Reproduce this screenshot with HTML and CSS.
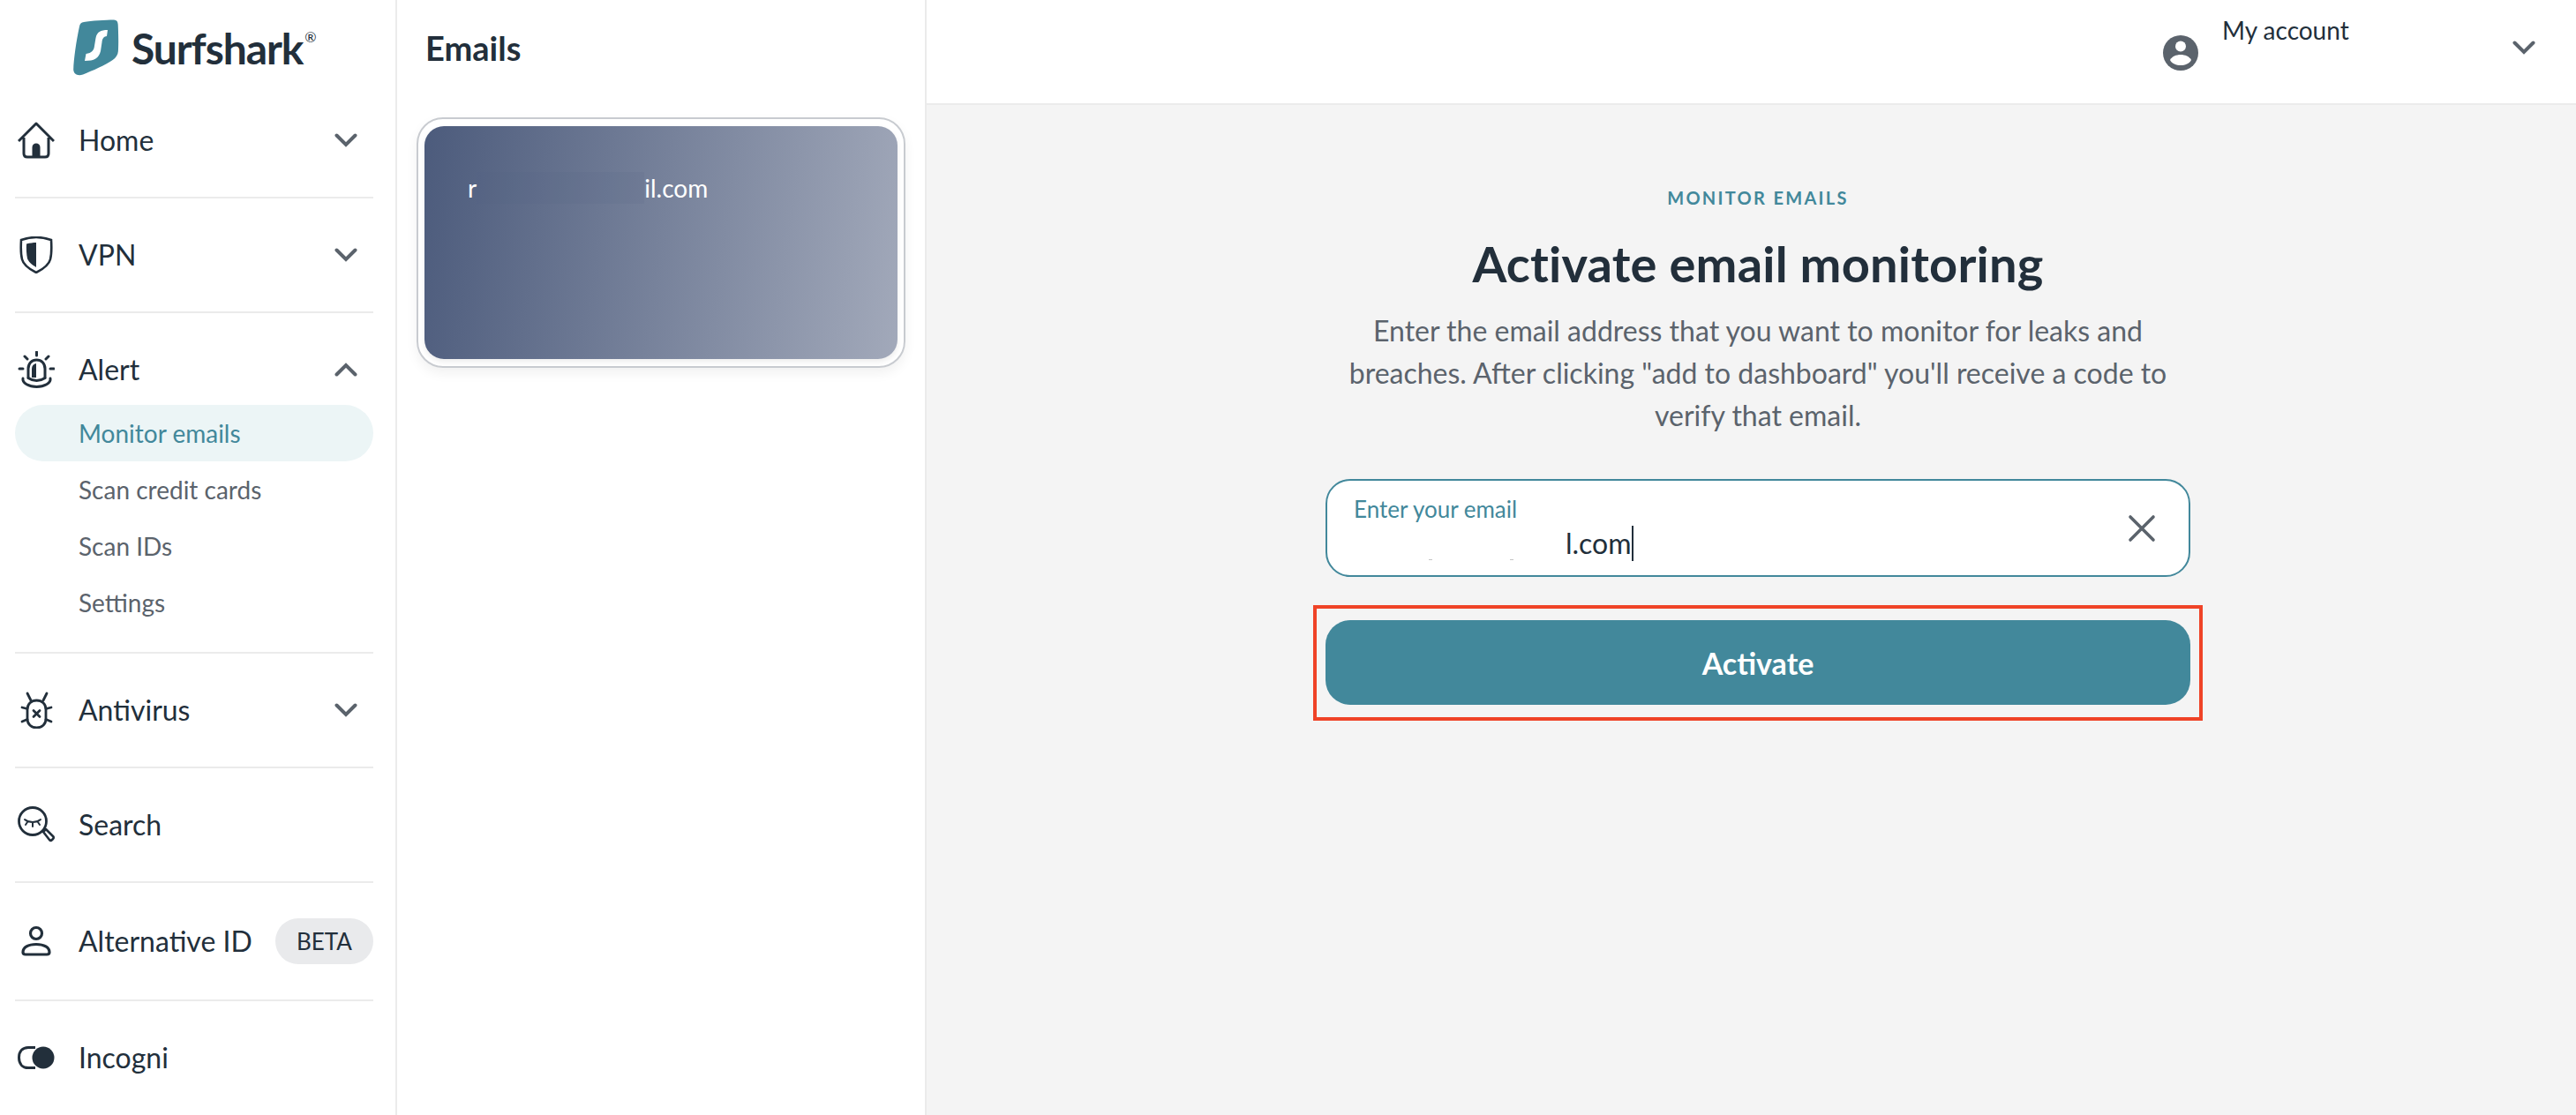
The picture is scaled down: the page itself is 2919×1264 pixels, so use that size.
FILE: index.html
```html
<!DOCTYPE html>
<html lang="en">
<head>
    <meta charset="UTF-8">
    <title>Surfshark - Monitor emails</title>
    <link rel="stylesheet" href="styles.css">
</head>
<body>
    <aside class="sidebar">
        <div class="logo">
            <svg class="logo-mark" viewBox="0 0 52 64"><path d="M12 3C20 1.500 37 .5 46 .5 49.500 .7 50.500 2.500 50.700 6c.5 10 .7 22 .2 30-.3 4-2.500 7.500-6.200 10C36 52 22 58 11 62.500 5 64.500 .5 62 .2 57 .5 45 3.500 24 7 8 7.500 5 9 3.500 12 3z" fill="#42889b"/><path d="M39 12C31 12 27 14 25.500 21L24 30C23.500 35 21 38 14.500 39L13 47C24 47 29 44 31 36L32.500 26C33 21 35 19.500 38 19z" fill="#fff"/></svg>
            <span class="logo-text">Surfshark</span><span class="logo-reg">®</span>
        </div>
        <nav class="nav">
            <div class="nav-row">
                <svg class="nav-icon" viewBox="0 0 42 42"><path d="M1 22L21 2l20 20M7 18v18c0 2.500 1.500 4 4 4h20c2.500 0 4-1.500 4-4V18" fill="none" stroke="#222f3b" stroke-width="3" stroke-linejoin="round"/><path d="M16.500 39V29c0-3 2-4.500 4.500-4.500s4.500 1.500 4.500 4.500v10z" fill="#222f3b"/></svg>
                <span class="nav-label">Home</span>
                <svg class="chevron" viewBox="0 0 26 16"><path d="M2.500 2.500L13 13 23.500 2.500" fill="none" stroke="#5b636c" stroke-width="4" stroke-linecap="round"/></svg>
            </div>
            <div class="nav-row">
                <svg class="nav-icon" viewBox="0 0 42 42"><path d="M4 4c6-2 12-3 17-3s11 1 17 3c.5 8 .5 16-1 22-1.500 6-8 11-16 15C13 37 6.500 32 5 26 3.500 20 3.500 12 4 4z" fill="none" stroke="#222f3b" stroke-width="2.600"/><path d="M21 7c-3.500 0-7 .5-11 1.500-.3 6 0 12 1 16.500 1 3.500 5 7 10 10z" fill="#222f3b"/></svg>
                <span class="nav-label">VPN</span>
                <svg class="chevron" viewBox="0 0 26 16"><path d="M2.500 2.500L13 13 23.500 2.500" fill="none" stroke="#5b636c" stroke-width="4" stroke-linecap="round"/></svg>
            </div>
            <div class="nav-row nav-row-open">
                <svg class="nav-icon" viewBox="0 0 42 42"><g fill="none" stroke="#222f3b" stroke-width="3" stroke-linecap="round"><path d="M21.500 1v4M8 6l3 3M35 6l-3 3M2 20h4M37 20h4"/><path d="M12 30V20c0-6 4-10 9.500-10S31 14 31 20v10"/><path d="M6 31c-1 5.500 7 9.500 15.500 9.500S38 36.500 37 31"/><path d="M12 30.500c3 2 6 3 9.500 3s6.500-1 9.500-3"/></g><path d="M21 14c-3 .5-5 3-5 6v10h5z" fill="#222f3b"/></svg>
                <span class="nav-label">Alert</span>
                <svg class="chevron" viewBox="0 0 26 16"><path d="M2.500 13.500L13 3 23.500 13.500" fill="none" stroke="#5b636c" stroke-width="4" stroke-linecap="round"/></svg>
            </div>
            <ul class="sub-list">
                <li class="sub-item sub-item-active">Monitor emails</li>
                <li class="sub-item">Scan credit cards</li>
                <li class="sub-item">Scan IDs</li>
                <li class="sub-item">Settings</li>
            </ul>
            <div class="nav-row">
                <svg class="nav-icon" viewBox="0 0 42 42"><g fill="none" stroke="#222f3b" stroke-width="2.800" stroke-linecap="round"><path d="M11 2l4 8M33 2l-4 8M5 18l6 1.500M38 18l-6 1.500M5 34l6-2.500M38 34l-6-2.500"/><path d="M11 20c0-6 4.500-10 10.500-10S32 14 32 20v11c0 6-4.500 10-10.500 10S11 37 11 31z"/><path d="M18 21.500l7 7M25 21.500l-7 7"/></g></svg>
                <span class="nav-label">Antivirus</span>
                <svg class="chevron" viewBox="0 0 26 16"><path d="M2.500 2.500L13 13 23.500 2.500" fill="none" stroke="#5b636c" stroke-width="4" stroke-linecap="round"/></svg>
            </div>
            <div class="nav-row">
                <svg class="nav-icon" viewBox="0 0 42 42"><circle cx="17" cy="17" r="15.500" fill="none" stroke="#222f3b" stroke-width="2.800"/><path d="M8 15c5 4 13 4 18 0M11 18l-2 3M17 19v4M23 18l2 3" fill="none" stroke="#222f3b" stroke-width="2" stroke-linecap="round"/><path d="M29 29l3-3 8 8c1 1 1 2 0 3l-1 1c-1 1-2 1-3 0z" fill="none" stroke="#222f3b" stroke-width="2.600" stroke-linejoin="round"/></svg>
                <span class="nav-label">Search</span>
            </div>
            <div class="nav-row nav-row-tall">
                <svg class="nav-icon" viewBox="0 0 42 42"><circle cx="21" cy="12" r="6.500" fill="none" stroke="#222f3b" stroke-width="3.200"/><path d="M9 36c-2 0-3-1-3-2.500C6 28 12 24.500 21 24.500s15 3.500 15 9c0 1.500-1 2.500-3 2.500z" fill="none" stroke="#222f3b" stroke-width="3.200" stroke-linejoin="round"/></svg>
                <span class="nav-label">Alternative ID</span>
                <span class="badge">BETA</span>
            </div>
            <div class="nav-row nav-row-last">
                <svg class="nav-icon" viewBox="0 0 42 42"><path d="M20 9.500h-8C5.500 9.500 1.500 14 1.500 21S5.500 32.500 12 32.500h8" fill="none" stroke="#222f3b" stroke-width="3"/><circle cx="29" cy="21" r="12.500" fill="#222f3b"/></svg>
                <span class="nav-label">Incogni</span>
            </div>
        </nav>
    </aside>

    <section class="emails">
        <h2 class="emails-title">Emails</h2>
        <div class="card-frame">
            <div class="card">
                <span>r</span><span class="card-redact"></span><span>il.com</span>
            </div>
        </div>
    </section>

    <div class="main">
        <header class="topbar">
            <svg class="account-icon" viewBox="0 0 40 40"><circle cx="20" cy="20" r="20" fill="#5b636c"/><circle cx="20" cy="12.500" r="6" fill="#fff"/><path d="M8 28c2-4 7-6 12-6s10 2 12 6c-2 4-7 6-12 6S10 32 8 28z" fill="#fff"/></svg>
            <span class="account-name">My account</span>
            <svg class="chevron" viewBox="0 0 26 16"><path d="M2.500 2.500L13 13 23.500 2.500" fill="none" stroke="#5b636c" stroke-width="4" stroke-linecap="round"/></svg>
        </header>
        <main class="content">
            <div class="eyebrow">MONITOR EMAILS</div>
            <h1 class="headline">Activate email monitoring</h1>
            <p class="intro">Enter the email address that you want to monitor for leaks and breaches. After clicking "add to dashboard" you'll receive a code to verify that email.</p>
            <div class="field">
                <div class="field-text">
                    <label class="field-label">Enter your email</label>
                    <div class="field-value"><span class="value-redact"></span><span>l.com</span><span class="caret"></span></div>
                </div>
                <svg class="field-clear" viewBox="0 0 32 32"><path d="M3 3l26 26M29 3L3 29" fill="none" stroke="#5b636c" stroke-width="3.600" stroke-linecap="round"/></svg>
            </div>
            <div class="highlight">
                <button class="activate">Activate</button>
            </div>
        </main>
    </div>
</body>
</html>
```
FILE: styles.css
```css
* {
    box-sizing: border-box;
}
html, body {
    height: 100%;
}
body {
    margin: 0;
    display: flex;
    height: 1264px;
    overflow: hidden;
    background: #fff;
    color: #222f3b;
    font-family: Lato, "Open Sans", sans-serif;
}

/* sidebar */
.sidebar {
    width: 450px;
    flex: none;
    border-right: 2px solid #ebebeb;
    padding: 0 25px 0 17px;
}
.logo {
    height: 95px;
    padding: 22px 0 0 66px;
    display: flex;
    align-items: flex-start;
}
.logo-mark {
    width: 52px;
    height: 64px;
    flex: none;
}
.logo-text {
    margin: 9px 0 0 14px;
    font-size: 48px;
    line-height: 48px;
    font-weight: 700;
    letter-spacing: -1.1px;
}
.logo-reg {
    margin: 10px 0 0 2px;
    font-size: 16px;
    line-height: 20px;
}
.nav-row {
    height: 130px;
    display: flex;
    align-items: center;
    border-bottom: 2px solid #ebebeb;
}
.nav-row-open {
    height: 104px;
    padding-top: 23px;
    border-bottom: none;
}
.nav-row-tall {
    height: 134px;
}
.nav-row-last {
    padding-bottom: 2px;
    border-bottom: none;
}
.nav-icon {
    width: 42px;
    height: 42px;
    flex: none;
    margin: 0 27px 0 3px;
}
.nav-label {
    flex: 1;
    font-size: 32px;
    line-height: 40px;
}
.chevron {
    width: 26px;
    height: 16px;
    flex: none;
    margin-right: 18px;
}
.badge {
    flex: none;
    width: 111px;
    height: 52px;
    border-radius: 26px;
    background: #e9eaec;
    font-size: 26px;
    line-height: 52px;
    text-align: center;
}
.sub-list {
    list-style: none;
    margin: 0;
    padding: 0 0 24px;
    border-bottom: 2px solid #ebebeb;
}
.sub-item {
    height: 64px;
    padding-left: 72px;
    border-radius: 32px;
    color: #5b636c;
    font-size: 28px;
    line-height: 64px;
}
.sub-item-active {
    background: #ecf5f6;
    color: #42889b;
}

/* emails column */
.emails {
    width: 600px;
    flex: none;
    border-right: 2px solid #ebebeb;
    padding: 0 22px;
}
.emails-title {
    margin: 0;
    padding: 32px 0 0 10px;
    height: 133px;
    font-size: 38px;
    line-height: 44px;
    font-weight: 700;
}
.card-frame {
    width: 554px;
    height: 284px;
    padding: 8px 7px;
    border: 2px solid #c8cbd0;
    border-radius: 30px;
    box-shadow: 0 6px 14px rgba(0, 0, 0, 0.06);
}
.card {
    height: 100%;
    padding: 52px 0 0 49px;
    border-radius: 22px;
    background: linear-gradient(98deg, #4c5b7c 0%, #a2a9ba 100%);
    box-shadow: 0 3px 6px rgba(0, 0, 0, 0.08);
    color: #fff;
    font-size: 28px;
    line-height: 36px;
    display: flex;
    align-items: flex-start;
}
.card-redact {
    width: 190px;
    height: 36px;
    background: rgba(80, 95, 130, 0.12);
}

/* right side */
.main {
    flex: 1;
    min-width: 0;
    background: #f4f4f4;
}
.topbar {
    height: 119px;
    background: #fff;
    border-bottom: 2px solid #ebebeb;
    display: flex;
    align-items: center;
    padding: 0 0 0 1401px;
}
.topbar .chevron {
    margin: 0 0 9px 4px;
}
.account-icon {
    width: 40px;
    height: 40px;
    flex: none;
    margin-top: 3px;
}
.account-name {
    width: 325px;
    margin: 0 0 50px 27px;
    font-size: 28px;
    line-height: 36px;
}
.content {
    display: flex;
    flex-direction: column;
    align-items: center;
    padding: 92px 0 0 15px;
}
.eyebrow {
    color: #42889b;
    font-size: 20px;
    line-height: 26px;
    font-weight: 700;
    letter-spacing: 2.3px;
}
.headline {
    margin: 27px 0 0;
    font-size: 56px;
    line-height: 70px;
    font-weight: 700;
    letter-spacing: 0.2px;
}
.intro {
    width: 960px;
    margin: 17px 0 0;
    color: #5b636c;
    font-size: 32px;
    line-height: 48px;
    text-align: center;
}
.field {
    width: 980px;
    height: 111px;
    margin-top: 48px;
    padding: 0 37px 0 30px;
    display: flex;
    align-items: center;
    justify-content: space-between;
    background: #fff;
    border: 2px solid #42889b;
    border-radius: 28px;
}
.field-label {
    display: block;
    color: #42889b;
    font-size: 26px;
    line-height: 32px;
}
.field-value {
    display: flex;
    align-items: center;
    margin-top: 3px;
    font-size: 32px;
    line-height: 40px;
}
.value-redact {
    width: 240px;
    height: 40px;
    background:
        linear-gradient(#c4c4c4, #c4c4c4) 85px 38px / 4px 1px no-repeat,
        linear-gradient(#c4c4c4, #c4c4c4) 177px 38px / 4px 1px no-repeat;
}
.caret {
    width: 2px;
    height: 40px;
    background: #222f3b;
}
.field-clear {
    width: 32px;
    height: 32px;
    flex: none;
}
.highlight {
    width: 1008px;
    height: 131px;
    margin-top: 32px;
    padding: 13px 10px;
    border: 4px solid #ef4327;
}
.activate {
    display: block;
    width: 100%;
    height: 96px;
    border: none;
    border-radius: 28px;
    background: #42889b;
    color: #fff;
    font-family: inherit;
    font-size: 34px;
    font-weight: 700;
}
```
